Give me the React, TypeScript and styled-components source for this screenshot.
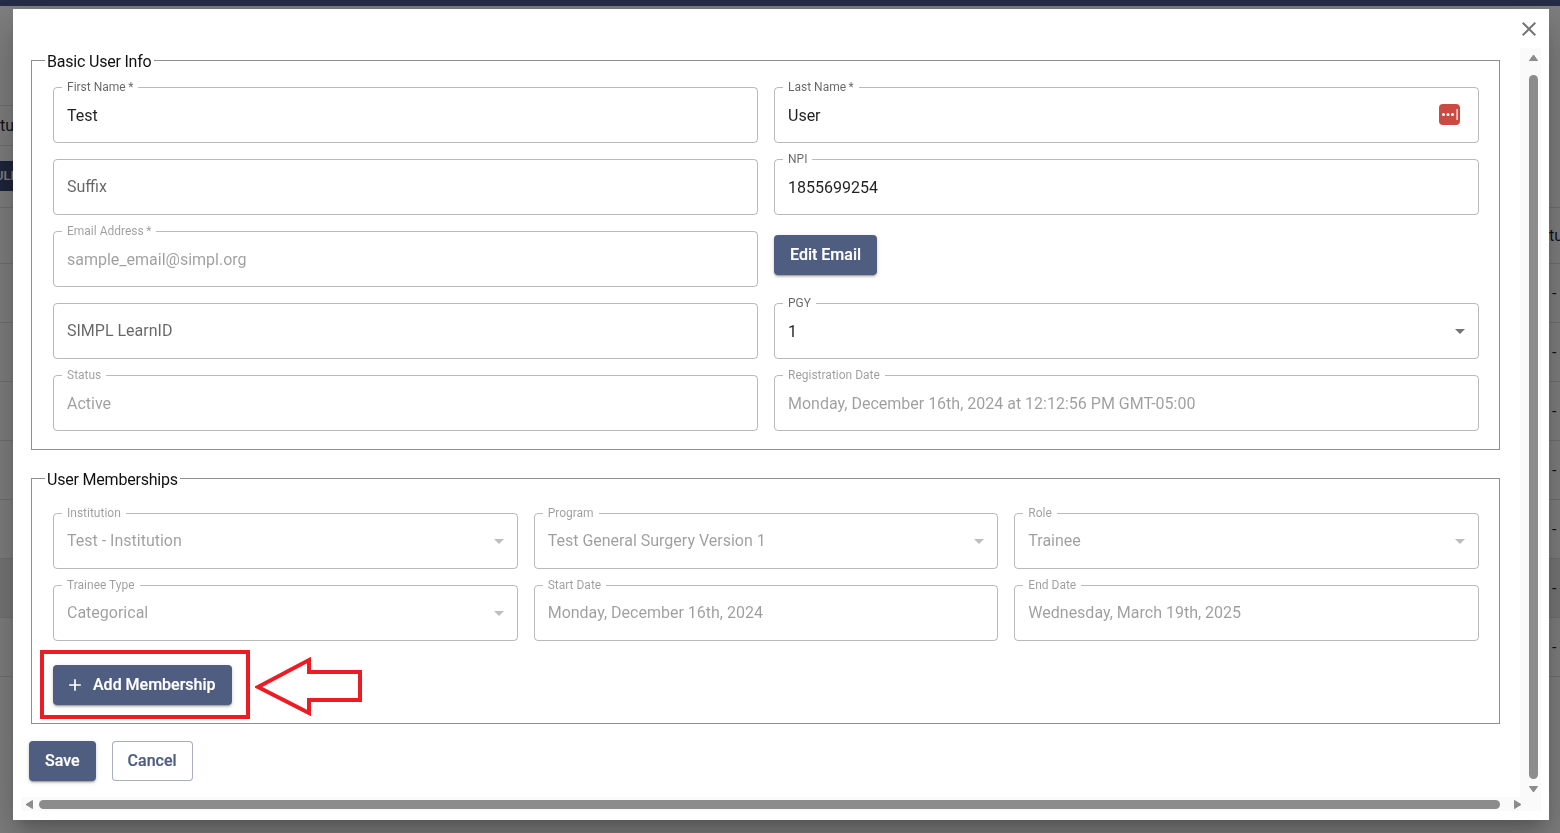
import { createGlobalStyle, styled } from "styled-components";

const BRAND = "#4f5d80";

const GlobalStyle = createGlobalStyle`
  html, body {
    margin: 0;
    height: 100%;
    overflow: hidden;
    background: #fff;
    font-family: Roboto, "Liberation Sans", sans-serif;
  }
`;

/* page behind the dialog, only its edges can be seen */
const Page = styled.div`
  height: 833px;
  overflow: hidden;
  display: flex;
  flex-direction: column;
`;

const TopBar = styled.div`
  height: 6px;
  flex: none;
  margin-bottom: 99px;
  background: #4c5a90;
`;

const ToolRow = styled.div<{ $height: number }>`
  width: 300px;
  height: ${(p) => p.$height}px;
  flex: none;
  box-sizing: border-box;
  border-top: 1px solid #e0e0e0;
  display: flex;
  align-items: center;
  font-size: 16px;
  line-height: 1;
  color: #1f2937;
  overflow: hidden;
`;

const ToolButton = styled.div`
  width: 60px;
  height: 30px;
  flex: none;
  margin-bottom: 2px;
  background: #3d4a78;
  color: #fff;
  font-size: 13px;
  font-weight: 600;
  line-height: 30px;
  text-indent: -5px;
  overflow: hidden;
`;

const TableRow = styled.div<{ $height: number; $hover?: boolean }>`
  height: ${(p) => p.$height}px;
  flex: none;
  box-sizing: border-box;
  border-top: 1px solid #e0e0e0;
  background: ${(p) => (p.$hover ? "#eeeeee" : "transparent")};
  display: flex;
  justify-content: flex-end;
  align-items: center;
  font-size: 16px;
  color: #1f2937;
`;

const TableCell = styled.span<{ $width: number }>`
  width: ${(p) => p.$width}px;
`;

const Overlay = styled.div`
  position: fixed;
  inset: 0;
  background: rgba(0, 0, 0, 0.5);
  padding: 9px 11px 13px 13px;
  box-sizing: border-box;
  display: flex;
`;

const Dialog = styled.div`
  position: relative;
  flex: 1;
  background: #fff;
  display: grid;
  grid-template-columns: 1507px 21px 8px;
  grid-template-rows: 788px 14px 9px;
  box-shadow: 0 11px 15px -7px rgba(0, 0, 0, 0.2),
    0 24px 38px 3px rgba(0, 0, 0, 0.14), 0 9px 46px 8px rgba(0, 0, 0, 0.12);
`;

const CloseButton = styled.button`
  position: absolute;
  top: 8px;
  right: 8px;
  width: 24px;
  height: 24px;
  padding: 0;
  border: 0;
  background: none;
  color: #757575;
  svg {
    display: block;
    width: 24px;
    height: 24px;
    fill: currentColor;
  }
`;

const Content = styled.div`
  grid-column: 1;
  grid-row: 1;
  padding: 42px 18px 0 16px;
  overflow: hidden;
`;

const Group = styled.fieldset<{ $top: number }>`
  margin: 0 2px 19px;
  padding: ${(p) => p.$top}px 20px 18px 21px;
  min-width: 0;
  border: 1px solid #8f8f8f;
`;

const GroupTitle = styled.legend`
  margin-left: -8px;
  padding: 2px 2px 0;
  font-size: 16px;
  line-height: 17px;
  letter-spacing: -0.2px;
  color: #111;
`;

const FieldGrid = styled.div<{ $columns: number }>`
  display: grid;
  grid-template-columns: repeat(${(p) => p.$columns}, 1fr);
  gap: 16px;
`;

const FieldBox = styled.div`
  position: relative;
  height: 56px;
  border-radius: 4px;
`;

const FieldLabel = styled.label<{ $floating: boolean; $disabled: boolean }>`
  position: absolute;
  left: 14px;
  top: ${(p) => (p.$floating ? "16px" : "-8px")};
  font-size: ${(p) => (p.$floating ? "16px" : "12px")};
  line-height: ${(p) => (p.$floating ? "23px" : "17px")};
  white-space: nowrap;
  color: rgba(0, 0, 0, ${(p) => (p.$disabled ? 0.38 : 0.6)});
`;

const FieldInput = styled.input`
  display: block;
  width: 100%;
  height: 56px;
  box-sizing: border-box;
  padding: 16.5px 14px;
  border: 0;
  outline: 0;
  background: none;
  font: 400 16px/23px Roboto, "Liberation Sans", sans-serif;
  color: rgba(0, 0, 0, 0.87);
  &:disabled {
    color: rgba(0, 0, 0, 0.38);
    -webkit-text-fill-color: rgba(0, 0, 0, 0.38);
  }
`;

const MembershipGrid = styled(FieldGrid)`
  ${FieldInput} {
    padding-top: 15.5px;
    padding-bottom: 17.5px;
  }
`;

const Outline = styled.fieldset`
  position: absolute;
  inset: -5px 0 0;
  margin: 0;
  padding: 0 8px;
  min-width: 0;
  border: 1px solid rgba(0, 0, 0, 0.27);
  border-radius: 4px;
  overflow: hidden;
  pointer-events: none;
  text-align: left;
`;

const Notch = styled.legend<{ $open: boolean }>`
  display: block;
  width: auto;
  height: 11px;
  padding: 0;
  font-size: 12px;
  white-space: nowrap;
  overflow: hidden;
  visibility: hidden;
  max-width: ${(p) => (p.$open ? "100%" : "0.01px")};
  span {
    display: inline-block;
    padding: 0 5px;
  }
`;

const DropArrow = styled.svg<{ $disabled: boolean }>`
  position: absolute;
  top: 16px;
  right: 7px;
  width: 24px;
  height: 24px;
  fill: rgba(0, 0, 0, ${(p) => (p.$disabled ? 0.26 : 0.54)});
`;

const KeyBadge = styled.svg`
  position: absolute;
  top: 17px;
  right: 19px;
  width: 21px;
  height: 21px;
`;

const Button = styled.button<{ $outlined?: boolean }>`
  height: 40px;
  padding: 0 ${(p) => (p.$outlined ? "15px" : "16px")};
  box-sizing: border-box;
  display: inline-flex;
  align-items: center;
  justify-self: start;
  border-radius: 4px;
  border: ${(p) => (p.$outlined ? "1px solid rgba(79, 93, 128, 0.5)" : "0")};
  background: ${(p) => (p.$outlined ? "#fff" : BRAND)};
  color: ${(p) => (p.$outlined ? BRAND : "#fff")};
  font: 500 16px/1.75 Roboto, "Liberation Sans", sans-serif;
  -webkit-text-stroke: 0.2px currentColor;
  box-shadow: ${(p) =>
    p.$outlined
      ? "none"
      : "0 3px 1px -2px rgba(0,0,0,.2), 0 2px 2px 0 rgba(0,0,0,.14), 0 1px 5px 0 rgba(0,0,0,.12)"};
`;

const EditEmailButton = styled(Button)`
  margin-top: 4px;
`;

const AddIcon = styled.svg`
  width: 20px;
  height: 20px;
  margin: 0 8px 0 -4px;
  fill: currentColor;
`;

const AddRow = styled.div`
  position: relative;
  width: max-content;
  margin-top: 24px;
`;

const AddButton = styled(Button)`
  display: flex;
`;

const Highlight = styled.div`
  position: absolute;
  inset: -15px -18px -14px -13px;
  border: 4px solid #ed1c24;
  pointer-events: none;
`;

const PointerArrow = styled.svg`
  position: absolute;
  left: 202px;
  top: -9px;
  width: 108px;
  height: 60px;
  fill: none;
  stroke: #ed1c24;
  stroke-width: 4;
`;

const Actions = styled.div`
  display: flex;
  gap: 16px;
  margin-top: -2px;
`;

const VScroll = styled.div`
  grid-column: 2;
  grid-row: 1;
  margin-top: 39px;
  padding: 6px 0 4px 9px;
  background: #fafafa;
  display: flex;
  flex-direction: column;
  align-items: flex-start;
`;

const VThumb = styled.div`
  width: 9px;
  flex: 1;
  margin: 14px 0 7px;
  border-radius: 5px;
  background: #8c8c8c;
`;

const HScroll = styled.div`
  grid-column: 1 / span 2;
  grid-row: 2;
  margin-left: 8px;
  padding: 3px 19px 2px 4px;
  background: #fafafa;
  display: flex;
  align-items: flex-start;
`;

const HThumb = styled.div`
  height: 9px;
  flex: 1;
  margin: 0 14px 0 6px;
  border-radius: 5px;
  background: #8c8c8c;
`;

const ScrollArrow = styled.svg`
  display: block;
  flex: none;
  fill: #8c8c8c;
  stroke: #8c8c8c;
  stroke-width: 1;
  stroke-linejoin: round;
`;

interface IFieldProps {
  label: string;
  value?: string;
  disabled?: boolean;
  select?: boolean;
  badge?: boolean;
}

function Field({ label, value, disabled = false, select, badge }: IFieldProps) {
  const floating = !value;
  return (
    <FieldBox>
      <FieldLabel $floating={floating} $disabled={disabled}>
        {label}
      </FieldLabel>
      <FieldInput readOnly disabled={disabled} value={value ?? ""} />
      {select && (
        <DropArrow $disabled={disabled} viewBox="0 0 24 24">
          <path d="M7 10l5 5 5-5z" />
        </DropArrow>
      )}
      {badge && (
        <KeyBadge viewBox="0 0 21 21">
          <rect width="21" height="21" rx="4" fill="#cb4a41" />
          <circle cx="4.5" cy="10.5" r="1.5" fill="#fff" />
          <circle cx="9" cy="10.5" r="1.5" fill="#fff" />
          <circle cx="13.5" cy="10.5" r="1.5" fill="#fff" />
          <rect x="17.5" y="5" width="1.2" height="11" fill="#fff" />
        </KeyBadge>
      )}
      <Outline aria-hidden>
        <Notch $open={!floating}>
          <span>{label}</span>
        </Notch>
      </Outline>
    </FieldBox>
  );
}

const ROW_COUNT = 8;

function App() {
  return (
    <>
      <GlobalStyle />
      <Page>
        <TopBar />
        <ToolRow $height={40}>tu</ToolRow>
        <ToolRow $height={62}>
          <ToolButton>ULI</ToolButton>
        </ToolRow>
        <TableRow $height={56}>
          <TableCell $width={11}>tu</TableCell>
        </TableRow>
        {Array.from({ length: ROW_COUNT }).map((_, i) => (
          <TableRow key={i} $height={59} $hover={i === 5}>
            {i < 7 && <TableCell $width={8}>-</TableCell>}
          </TableRow>
        ))}
      </Page>
      <Overlay>
        <Dialog>
          <CloseButton aria-label="Close">
            <svg viewBox="0 0 24 24">
              <path d="M19 6.41 17.59 5 12 10.59 6.41 5 5 6.41 10.59 12 5 17.59 6.41 19 12 13.41 17.59 19 19 17.59 13.41 12z" />
            </svg>
          </CloseButton>
          <Content>
            <Group $top={17}>
              <GroupTitle>Basic User Info</GroupTitle>
              <FieldGrid $columns={2}>
                <Field label={"First Name\u2009*"} value="Test" />
                <Field label={"Last Name\u2009*"} value="User" badge />
                <Field label="Suffix" />
                <Field label="NPI" value="1855699254" />
                <Field
                  label={"Email Address\u2009*"}
                  value="sample_email@simpl.org"
                  disabled
                />
                <EditEmailButton>Edit Email</EditEmailButton>
                <Field label="SIMPL LearnID" />
                <Field label="PGY" value="1" select />
                <Field label="Status" value="Active" disabled />
                <Field
                  label="Registration Date"
                  value="Monday, December 16th, 2024 at 12:12:56 PM GMT-05:00"
                  disabled
                />
              </FieldGrid>
            </Group>
            <Group $top={25}>
              <GroupTitle>User Memberships</GroupTitle>
              <MembershipGrid $columns={3}>
                <Field label="Institution" value="Test - Institution" disabled select />
                <Field label="Program" value="Test General Surgery Version 1" disabled select />
                <Field label="Role" value="Trainee" disabled select />
                <Field label="Trainee Type" value="Categorical" disabled select />
                <Field label="Start Date" value="Monday, December 16th, 2024" disabled />
                <Field label="End Date" value="Wednesday, March 19th, 2025" disabled />
              </MembershipGrid>
              <AddRow>
                <AddButton>
                  <AddIcon viewBox="0 0 24 24">
                    <path d="M19 13h-6v6h-2v-6H5v-2h6V5h2v6h6v2z" />
                  </AddIcon>
                  Add Membership
                </AddButton>
                <Highlight />
                <PointerArrow viewBox="0 0 108 60">
                  <path d="M3 31 54 4v12h51v28H54v13z" />
                </PointerArrow>
              </AddRow>
            </Group>
            <Actions>
              <Button>Save</Button>
              <Button $outlined>Cancel</Button>
            </Actions>
          </Content>
          <VScroll>
            <ScrollArrow width="9" height="7" viewBox="0 0 9 7">
              <path d="M4.5 1 8.5 6.5H.5z" />
            </ScrollArrow>
            <VThumb />
            <ScrollArrow width="9" height="7" viewBox="0 0 9 7">
              <path d="M.5.5h8L4.5 6z" />
            </ScrollArrow>
          </VScroll>
          <HScroll>
            <ScrollArrow width="8" height="9" viewBox="0 0 8 9">
              <path d="M7.5.5v8L1 4.5z" />
            </ScrollArrow>
            <HThumb />
            <ScrollArrow width="8" height="9" viewBox="0 0 8 9">
              <path d="M.5.5v8L7 4.5z" />
            </ScrollArrow>
          </HScroll>
        </Dialog>
      </Overlay>
    </>
  );
}

export default App;
